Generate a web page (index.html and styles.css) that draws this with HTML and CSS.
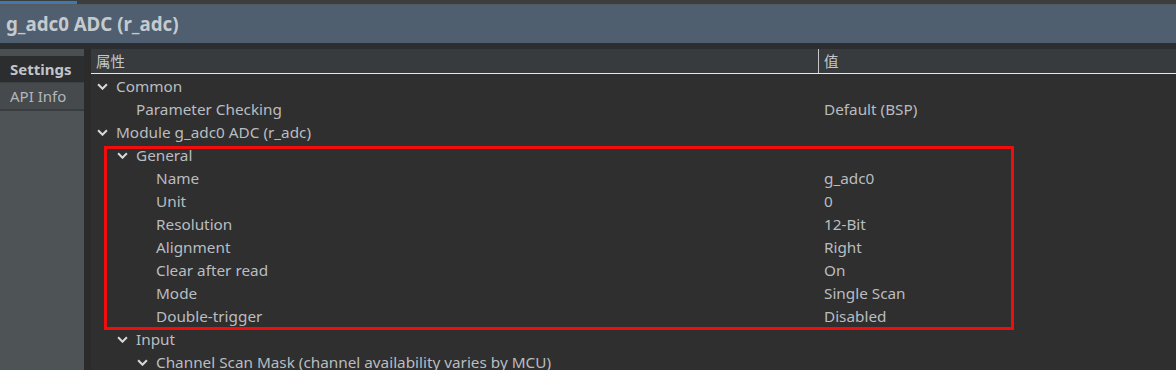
FILE: index.html
```html
<!DOCTYPE html>
<html>
<head>
<meta charset="utf-8">
<link rel="stylesheet" href="styles.css">
</head>
<body>
<div class="topstrip"><div class="tab-indicator"></div></div>
<div class="titlebar">g_adc0 ADC (r_adc)</div>
<div class="gapband"></div>
<div class="main">
  <div class="sidebar">
    <div class="sidepad"></div>
    <div class="stab active">Settings</div>
    <div class="stab">API Info</div>
  </div>
  <div class="sep"></div>
  <div class="tree">
    <div class="header">
      <div class="hcol1">属性</div>
      <div class="hcol2">值</div>
    </div>
    <div class="rows">
      <div class="row"><div class="c1 l0"><svg class="chev" viewBox="0 0 10 6"><path d="M1 1 L5 5 L9 1"/></svg>Common</div><div class="c2"></div></div>
      <div class="row"><div class="c1 l1">Parameter Checking</div><div class="c2">Default (BSP)</div></div>
      <div class="row"><div class="c1 l0"><svg class="chev" viewBox="0 0 10 6"><path d="M1 1 L5 5 L9 1"/></svg>Module g_adc0 ADC (r_adc)</div><div class="c2"></div></div>
      <div class="row"><div class="c1 l1"><svg class="chev" viewBox="0 0 10 6"><path d="M1 1 L5 5 L9 1"/></svg>General</div><div class="c2"></div></div>
      <div class="row"><div class="c1 l2">Name</div><div class="c2">g_adc0</div></div>
      <div class="row"><div class="c1 l2">Unit</div><div class="c2">0</div></div>
      <div class="row"><div class="c1 l2">Resolution</div><div class="c2">12-Bit</div></div>
      <div class="row"><div class="c1 l2">Alignment</div><div class="c2">Right</div></div>
      <div class="row"><div class="c1 l2">Clear after read</div><div class="c2">On</div></div>
      <div class="row"><div class="c1 l2">Mode</div><div class="c2">Single Scan</div></div>
      <div class="row"><div class="c1 l2">Double-trigger</div><div class="c2">Disabled</div></div>
      <div class="row"><div class="c1 l1"><svg class="chev" viewBox="0 0 10 6"><path d="M1 1 L5 5 L9 1"/></svg>Input</div><div class="c2"></div></div>
      <div class="row"><div class="c1 l2 wide"><svg class="chev" viewBox="0 0 10 6"><path d="M1 1 L5 5 L9 1"/></svg>Channel Scan Mask (channel availability varies by MCU)</div><div class="c2"></div></div>
    </div>
    <div class="highlight"></div>
  </div>
</div>
</body>
</html>
```
FILE: styles.css
```css
html, body {
  margin: 0;
  padding: 0;
  background: #2f2f2f;
  overflow: hidden;
}
body {
  width: 1176px;
  height: 370px;
  font-family: "Noto Sans", "Noto Sans CJK SC", sans-serif;
  color: #babdc0;
  display: flex;
  flex-direction: column;
}
.topstrip {
  height: 4px;
  background: #3c3d3f;
  border-bottom: 1px solid #57595c;
}
.tab-indicator {
  width: 77px;
  height: 3px;
  margin-top: 1px;
  background: #3d79b3;
}
.titlebar {
  height: 38px;
  background: #4f5f70;
  color: #c5cacf;
  font-weight: bold;
  font-size: 18.7px;
  line-height: 38px;
  padding-left: 6px;
}
.gapband {
  height: 6px;
  background: #2b2d30;
}
.main {
  flex: 1;
  display: flex;
  min-height: 0;
}
.sidebar {
  width: 84px;
  background: #4e5356;
  display: flex;
  flex-direction: column;
}
.sidepad {
  height: 7px;
  background: #4a4f52;
}
.stab {
  height: 26px;
  line-height: 26px;
  padding-left: 10px;
  font-size: 15px;
  color: #b3b7ba;
  background: #464a4d;
  border-bottom: 2px solid #3a3d40;
}
.stab.active {
  background: #2b2d2f;
  font-weight: bold;
  color: #c2c5c8;
  border-bottom: 1px solid #3e4144;
}
.sep {
  width: 7px;
  background: #2b2b2c;
}
.tree {
  flex: 1;
  position: relative;
  background: #2f2f2f;
}
.header {
  height: 24px;
  background: #373b3d;
  border-bottom: 1px solid #e8e8e8;
  display: flex;
  font-size: 14.5px;
  color: #c4c7ca;
  line-height: 24px;
}
.hcol1 {
  width: 722px;
  padding-left: 5px;
  border-right: 1px solid #c8c8c8;
}
.hcol2 {
  padding-left: 5px;
}
.rows {
  padding-top: 1px;
}
.row {
  height: 23px;
  display: flex;
  font-size: 15.3px;
  line-height: 23px;
}
.c1 {
  width: 733px;
  box-sizing: border-box;
  display: flex;
  align-items: center;
  white-space: nowrap;
}
.c1.wide { width: auto; }
.c1.l0 { padding-left: 25px; }
.c1.l1 { padding-left: 45px; }
.c1.l2 { padding-left: 65px; }
.chev {
  width: 11px;
  height: 7px;
  margin-left: -19px;
  margin-right: 8px;
  fill: none;
  stroke: #d6d8da;
  stroke-width: 1.9;
}
.c2 {
  white-space: nowrap;
}
.highlight {
  position: absolute;
  left: 13px;
  top: 97px;
  width: 904px;
  height: 178px;
  border: 3px solid #f20d0d;
  pointer-events: none;
}
```
